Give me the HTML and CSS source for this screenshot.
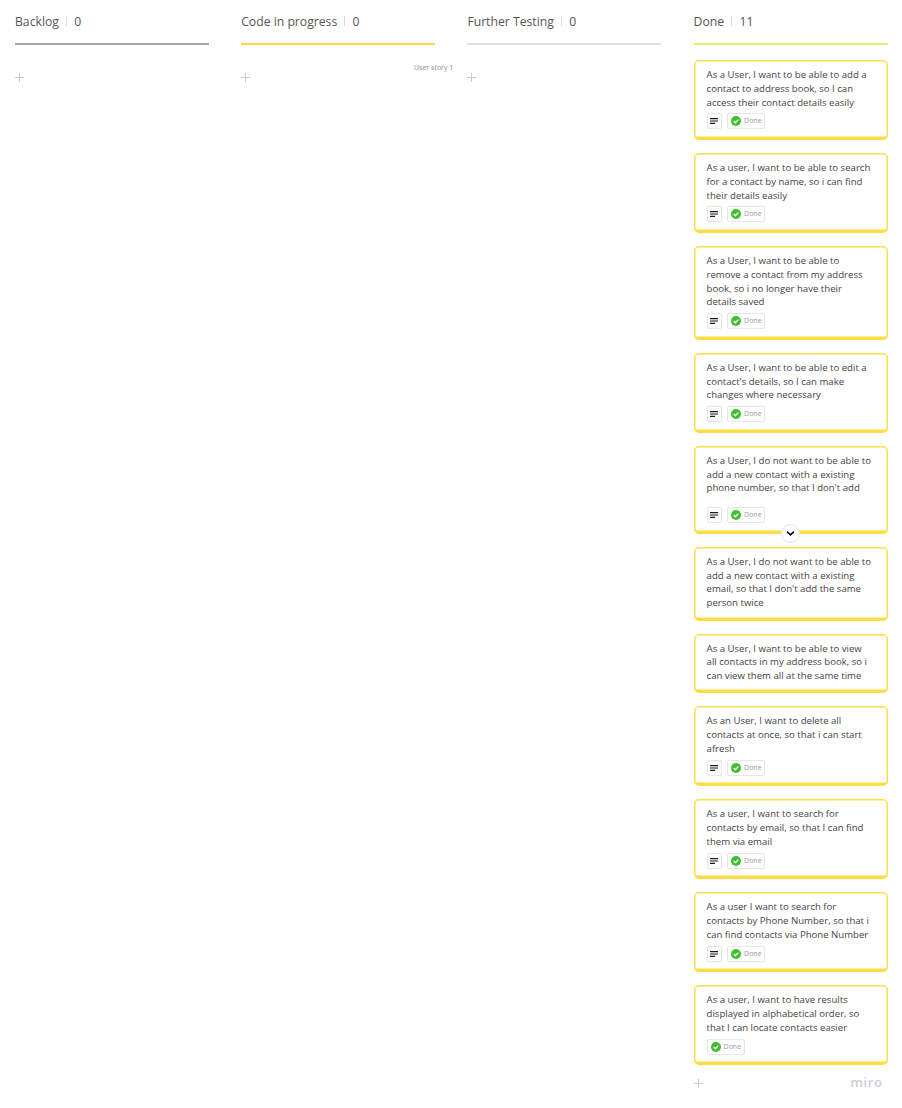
FILE: index.html
```html
<!DOCTYPE html>
<html lang="en">

<head>
    <meta charset="UTF-8">
    <title>Kanban board</title>
    <link rel="stylesheet" href="styles.css">
</head>

<body>
    <svg class="icon-defs" width="0" height="0">
        <symbol id="i-notes" viewBox="0 0 8 6">
            <path d="M0 0h8v1.2H0zM0 2.4h8v1.2H0zM0 4.8h5v1.2H0z" fill="#1a1a1a" />
        </symbol>
        <symbol id="i-done" viewBox="0 0 11 11">
            <circle cx="5.5" cy="5.5" r="5.5" fill="#3fbf2e" />
            <path d="M3 5.6l1.8 1.8L8.1 4" fill="none" stroke="#fff" stroke-width="1.5" />
        </symbol>
        <symbol id="i-plus" viewBox="0 0 9 9">
            <path d="M4.5 0v9M0 4.5h9" fill="none" stroke="#c9c9c9" stroke-width="1" />
        </symbol>
    </svg>

    <span class="frame-label">User story 1</span>

    <main class="board">
        <section class="column">
            <header class="column-head line-grey"><span>Backlog</span><i></i><span>0</span></header>
            <button class="add"><svg><use href="#i-plus" /></svg></button>
        </section>

        <section class="column">
            <header class="column-head line-yellow"><span>Code in progress</span><i></i><span>0</span></header>
            <button class="add"><svg><use href="#i-plus" /></svg></button>
        </section>

        <section class="column">
            <header class="column-head line-light"><span>Further Testing</span><i></i><span>0</span></header>
            <button class="add"><svg><use href="#i-plus" /></svg></button>
        </section>

        <section class="column">
            <header class="column-head line-lime"><span>Done</span><i></i><span>11</span></header>
            <div class="cards">
                <article class="card">
                    <p>As a User, I want to be able to add a contact to address book, so I can access their contact details easily</p>
                    <div class="meta">
                        <span class="chip chip-notes"><svg><use href="#i-notes" /></svg></span>
                        <span class="chip"><svg><use href="#i-done" /></svg>Done</span>
                    </div>
                </article>
                <article class="card">
                    <p>As a user, I want to be able to search for a contact by name, so i can find their details easily</p>
                    <div class="meta">
                        <span class="chip chip-notes"><svg><use href="#i-notes" /></svg></span>
                        <span class="chip"><svg><use href="#i-done" /></svg>Done</span>
                    </div>
                </article>
                <article class="card">
                    <p>As a User, I want to be able to remove a contact from my address book, so i no longer have their details saved</p>
                    <div class="meta">
                        <span class="chip chip-notes"><svg><use href="#i-notes" /></svg></span>
                        <span class="chip"><svg><use href="#i-done" /></svg>Done</span>
                    </div>
                </article>
                <article class="card">
                    <p>As a User, I want to be able to edit a contact's details, so I can make changes where necessary</p>
                    <div class="meta">
                        <span class="chip chip-notes"><svg><use href="#i-notes" /></svg></span>
                        <span class="chip"><svg><use href="#i-done" /></svg>Done</span>
                    </div>
                </article>
                <article class="card card-clipped">
                    <p>As a User, I do not want to be able to add a new contact with a existing phone number, so that I don't add</p>
                    <div class="meta">
                        <span class="chip chip-notes"><svg><use href="#i-notes" /></svg></span>
                        <span class="chip"><svg><use href="#i-done" /></svg>Done</span>
                    </div>
                    <button class="expand">
                        <svg viewBox="0 0 10 7"><path d="M1.2 1.4L5 5l3.8-3.6" fill="none" stroke="#050038" stroke-width="1.7" /></svg>
                    </button>
                </article>
                <article class="card">
                    <p>As a User, I do not want to be able to add a new contact with a existing email, so that I don't add the same person twice</p>
                </article>
                <article class="card">
                    <p>As a User, I want to be able to view all contacts in my address book, so i can view them all at the same time</p>
                </article>
                <article class="card">
                    <p>As an User, I want to delete all contacts at once, so that i can start afresh</p>
                    <div class="meta">
                        <span class="chip chip-notes"><svg><use href="#i-notes" /></svg></span>
                        <span class="chip"><svg><use href="#i-done" /></svg>Done</span>
                    </div>
                </article>
                <article class="card">
                    <p>As a user, I want to search for contacts by email, so that I can find them via email</p>
                    <div class="meta">
                        <span class="chip chip-notes"><svg><use href="#i-notes" /></svg></span>
                        <span class="chip"><svg><use href="#i-done" /></svg>Done</span>
                    </div>
                </article>
                <article class="card">
                    <p>As a user I want to search for contacts by Phone Number, so that i can find contacts via Phone Number</p>
                    <div class="meta">
                        <span class="chip chip-notes"><svg><use href="#i-notes" /></svg></span>
                        <span class="chip"><svg><use href="#i-done" /></svg>Done</span>
                    </div>
                </article>
                <article class="card">
                    <p>As a user, I want to have results displayed in alphabetical order, so that I can locate contacts easier</p>
                    <div class="meta">
                        <span class="chip"><svg><use href="#i-done" /></svg>Done</span>
                    </div>
                </article>
            </div>
            <footer class="column-foot">
                <button class="add"><svg><use href="#i-plus" /></svg></button>
                <span class="brand">miro</span>
            </footer>
        </section>
    </main>
</body>

</html>
```

FILE: styles.css
```css
* {
    margin: 0;
    padding: 0;
    box-sizing: border-box;
}

body {
    position: relative;
    height: 1108px;
    overflow: hidden;
    background: #fff;
    color: #3a3a3a;
    font-family: 'Open Sans', sans-serif;
}

.icon-defs {
    position: absolute;
}

/* Board columns */
.board {
    display: grid;
    grid-template-columns: repeat(4, 194px);
    column-gap: 32.2px;
    padding-left: 15px;
}

.column-head {
    display: flex;
    align-items: center;
    height: 45px;
    padding-bottom: 1px;
    border-bottom: 2px solid #a3a3a3;
    font-size: 12.2px;
    color: #555;
}

.column-head i {
    width: 1px;
    height: 10px;
    margin: 0 7.2px;
    background: #dcdcdc;
}

.line-yellow {
    border-color: #ffd83f;
}

.line-light {
    border-color: #dedede;
}

.line-lime {
    border-color: #e3ef5b;
}

.add {
    display: block;
    width: 9px;
    height: 9px;
    margin-top: 28px;
    background: none;
    border: 0;
}

.add svg {
    display: block;
    width: 9px;
    height: 9px;
}

/* Cards */
.cards {
    display: flex;
    flex-direction: column;
    gap: 13px;
    margin-top: 15px;
}

.card {
    position: relative;
    padding: 7px 15px 7.6px 12px;
    border: 1px solid #ffdc42;
    border-bottom-width: 3px;
    border-radius: 5px;
    box-shadow: inset 0 0 0 0.5px #ffdc42;
    background: #fff;
    font-size: 9.6px;
    line-height: 13.8px;
    color: #444;
}

.card-clipped p {
    height: 49.4px;
}

.meta {
    display: flex;
    gap: 5px;
    margin-top: 4px;
}

.chip {
    display: flex;
    align-items: center;
    gap: 3px;
    height: 16px;
    padding: 0 2.5px 0 3px;
    border: 1px solid #e6e6e6;
    border-radius: 2px;
    font-size: 7px;
    color: #9a9a9a;
}

.chip svg {
    width: 10px;
    height: 10px;
}

.chip-notes {
    width: 15.5px;
    padding: 0;
    justify-content: center;
}

.chip-notes svg {
    width: 8px;
    height: 6px;
}

.expand {
    position: absolute;
    left: 86.4px;
    bottom: -12px;
    z-index: 1;
    display: flex;
    align-items: center;
    justify-content: center;
    width: 19px;
    height: 19px;
    border: 1px solid #e6e6e6;
    border-radius: 50%;
    background: #fff;
}

.expand svg {
    width: 9px;
    height: 7px;
}

.column-foot {
    display: flex;
    align-items: flex-start;
    justify-content: space-between;
    margin-top: 10px;
    padding-right: 5px;
}

.column-foot .add {
    margin-top: 4px;
}

.brand {
    font-size: 13px;
    font-weight: 600;
    letter-spacing: 0.6px;
    line-height: 14px;
    color: #cdcddb;
}

/* Label of a frame on the canvas */
.frame-label {
    position: absolute;
    top: 63px;
    left: 414px;
    font-size: 7px;
    line-height: 10px;
    color: #8c8c8c;
}
```
